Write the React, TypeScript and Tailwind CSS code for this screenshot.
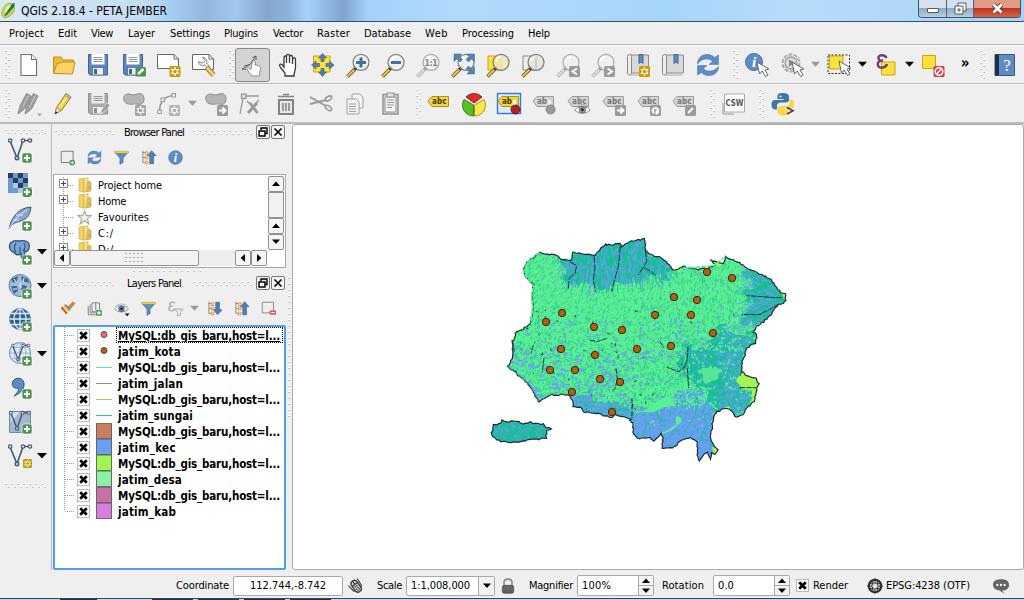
import React, { useLayoutEffect, useRef } from "react";

type Pt = [number, number];

/* Text whose letter spacing is tuned so that it spans a given width. */
function Fit({ w, children, className = "" }: { w: number; children: string; className?: string }) {
  const ref = useRef<HTMLSpanElement>(null);
  useLayoutEffect(() => {
    const el = ref.current;
    if (!el) return;
    el.style.letterSpacing = "0px";
    const natural = el.getBoundingClientRect().width;
    el.style.letterSpacing = `${(w - natural) / children.length}px`;
  }, [w, children]);
  return (
    <span ref={ref} className={`inline-block shrink-0 whitespace-pre ${className}`}>
      {children}
    </span>
  );
}

function Dots({ id, className }: { id: string; className: string }) {
  return (
    <svg className={className} shapeRendering="crispEdges">
      <defs>
        <pattern id={id} width="6" height="6" patternUnits="userSpaceOnUse">
          <rect x="0" y="0" width="2" height="2" fill="#fff" />
          <rect x="1" y="1" width="1" height="1" fill="#b5b5b5" />
          <rect x="0" y="1" width="1" height="1" fill="#d0d0d0" />
          <rect x="3" y="3" width="2" height="2" fill="#fff" />
          <rect x="4" y="4" width="1" height="1" fill="#b5b5b5" />
          <rect x="3" y="4" width="1" height="1" fill="#d0d0d0" />
        </pattern>
      </defs>
      <rect width="100%" height="100%" fill={`url(#${id})`} />
    </svg>
  );
}

function Tri({ c = "#000", dir = "down", s = 9 }: { c?: string; dir?: "down" | "up" | "left" | "right"; s?: number }) {
  const d = { down: "M0 2H10L5 7.5Z", up: "M0 7.5H10L5 2Z", left: "M7.5 0V10L2 5Z", right: "M2.5 0V10L8 5Z" }[dir];
  return (
    <svg width={s} height={s} viewBox="0 0 10 10" className="shrink-0">
      <path d={d} fill={c} />
    </svg>
  );
}

const Plus = ({ x = 14, y = 14 }: { x?: number; y?: number }) => (
  <g transform={`translate(${x} ${y})`}>
    <rect width="10" height="10" rx="2" fill="#4f9450" stroke="#fff" strokeWidth=".6" />
    <path d="M5 2V8M2 5H8" stroke="#fff" strokeWidth="2" />
  </g>
);
const Star = ({ x = 13, y = 13, c = "#c99c08" }: { x?: number; y?: number; c?: string }) => (
  <g transform={`translate(${x} ${y})`}>
    <rect width="11" height="11" rx="1.5" fill={c} />
    <path d="M5.5 1.2V9.8M1.8 3.4L9.2 7.6M9.2 3.4L1.8 7.6" stroke="#fff" strokeWidth="1.5" />
    <circle cx="5.5" cy="5.5" r="2.3" fill={c} stroke="#fff" strokeWidth="1" />
  </g>
);
const Badge = ({ d }: { d: string }) => (
  <g transform="translate(13 13)">
    <rect width="11" height="11" rx="1.5" fill="#9b9b9b" />
    <path d={d} stroke="#fff" strokeWidth="2" fill="none" />
  </g>
);
const Lens = ({ dim = false, fill = "#eef0ee" }: { dim?: boolean; fill?: string }) => (
  <g>
    <path d="M10 15L1.5 23.5" stroke={dim ? "#aaa" : "#4d4020"} strokeWidth="3.4" />
    <path d="M8.5 16.5L1.7 23.2" stroke={dim ? "#ddd" : "#f6c63b"} strokeWidth="2" />
    <path d="M11 13.8L8.6 16.3" stroke={dim ? "#888" : "#222"} strokeWidth="2.6" />
    <circle cx="15" cy="9.3" r="8" fill={fill} fillOpacity=".85" stroke={dim ? "#aaa" : "#7d7d7d"} strokeWidth="1.2" />
    <path d="M10 8a5.5 5.5 0 0 1 5-4.2" stroke="#fff" strokeWidth="1.4" fill="none" />
  </g>
);
const Tag = ({ c = "#d4d4d4", s = "#9c9c9c", t = "#777", label = "abc", y = 4 }: { c?: string; s?: string; t?: string; label?: string; y?: number }) => (
  <g transform={`translate(0 ${y})`}>
    <path d="M1 5L5 .5H21.5V10.5H5Z" fill={c} stroke={s} />
    <text x="5" y="8.2" fontSize="8" fontWeight="700" fill={t} fontFamily="DejaVu Sans" textLength={label === "abc" ? 14.5 : 10}>
      {label}
    </text>
  </g>
);
const Floppy = ({ a = "#5b86c0", b = "#3f6494", l = "#fff" }: { a?: string; b?: string; l?: string }) => (
  <g>
    <path d="M1.5 1.5H20.5V22H3L1.5 20.5Z" fill={a} stroke={b} strokeLinejoin="round" />
    <rect x="4.5" y="1" width="13" height="10.500" fill={l} />
    <path d="M6.5 4.5H15.5M6.5 6.5H15.5M6.5 8.5H15.5" stroke="#999" />
    <rect x="5.5" y="14.500" width="11" height="7.5" fill="#eee" stroke={b} strokeWidth=".7" />
    <rect x="7" y="16" width="3" height="5" fill={b} />
  </g>
);
const Cursor = ({ x = 0, y = 0 }: { x?: number; y?: number }) => (
  <path transform={`translate(${x} ${y})`} d="M12 9L14.5 21L17.2 18L20.5 23.5L23 22L20 17L23.8 16Z" fill="#fff" stroke="#666" strokeWidth="1" strokeLinejoin="round" />
);
const Refresh = () => (
  <g fill="#5c8dc9" stroke="#456f9f" strokeWidth=".5">
    <path d="M1.5 11C1.5 4 7 1 12 1.5c3 .2 5 1.3 6.5 3L22.5 2v9.5H13l3.5-3.2C13 4.8 6 4.8 1.5 11Z" />
    <path d="M22.5 13.5C22.5 20 17 23 12 22.5c-3-.2-5-1.3-6.5-3L1.5 22v-9.5H11l-3.5 3.2c3.5 3.5 10.500 3.500 15-2.200Z" />
  </g>
);
const Globe = ({ lat = true }: { lat?: boolean }) => (
  <g>
    <circle cx="12" cy="11" r="10.500" fill={lat ? "#2f5e95" : "#e2ebf5"} stroke="#5f86b0" />
    <path d="M12 .5V21.5M1.500 11H22.500M3 5.500H21M3 16.500H21M12 .5C4 5 4 17 12 21.500M12 .5c8 4.500 8 16.500 0 21" fill="none" stroke={lat ? "#dfeaf6" : "#9dbadb"} strokeWidth={lat ? 1.3 : 1} />
  </g>
);
const Vee = ({ o = 0, k = 1 }: { o?: number; k?: number }) => (
  <g transform={`translate(${o} ${o / 2}) scale(${k})`} fill="none" stroke="#42586e" strokeWidth="1.200">
    <path d="M2.500 4L9 20L14.500 4M17 2.500H21" strokeWidth="1.600" />
    <circle cx="2.200" cy="2.500" r="1.700" fill="#f8f8f8" />
    <circle cx="15" cy="2.500" r="1.700" fill="#f8f8f8" />
    <circle cx="22" cy="2.500" r="1.700" fill="#f8f8f8" />
    <circle cx="9" cy="20" r="1.900" fill="#a9bfd6" />
  </g>
);
const Info = ({ cx = 12, cy = 12, r = 11 }: { cx?: number; cy?: number; r?: number }) => (
  <g>
    <circle cx={cx} cy={cy} r={r} fill="#5e8cc4" stroke="#4571a6" />
    <text x={cx} y={cy + r * 0.6} textAnchor="middle" fontFamily="Liberation Serif" fontStyle="italic" fontWeight="700" fontSize={r * 1.8} fill="#fff">
      i
    </text>
  </g>
);
const Blob = () => <path d="M2 8C.5 3 5 1 9 2.500s6-1.500 10-.8c4 1 4 9 .5 10.300-4 1.200-5-1-9 .2C6 12.500 3 11.500 2 8Z" fill="#b5b5b5" stroke="#8f8f8f" />;
const Funnel = () => (
  <g>
    <path d="M1.500 3.500L9.500 13V23L14.500 20V13L22.500 3.500Z" fill="#5e8cc4" stroke="#416b9e" />
    <path d="M1 2H23V5H1Z" fill="#f7df3c" stroke="#9d8c32" strokeWidth=".7" />
  </g>
);
const TreeArrow = ({ up = true }: { up?: boolean }) => (
  <g>
    <path d="M3 1V20M3 4H8M3 12H8M3 20H8" stroke="#888" fill="none" strokeWidth="1.500" />
    <path d="M7 3h4v4H7zM7 10h4v4H7zM7 18h4v4H7z" fill="#fff" stroke="#f08a17" strokeWidth="1.500" />
    <path d={up ? "M17 1L24 9H20V22H14V9H10.500Z" : "M17 22L24 14H20V2H14V14H10.500Z"} fill="#4e7fb9" stroke="#33608f" />
  </g>
);
const Bookmark = () => (
  <g>
    <path d="M4.500 2H22.500V20H4.500Z" fill="#d8d8d8" stroke="#8c8c8c" />
    <path d="M1.500 3.500a1.600 1.600 0 0 1 4 0V20c0 2.500-4 2.500-4 0Z" fill="#eee" stroke="#888" />
    <path d="M4 22H21" stroke="#aaa" />
    <path d="M13 1.500h4v9l-2-1.700-2 1.700Z" fill="#5e8cc4" stroke="#3e648f" />
  </g>
);
const Eye = ({ y = 0, b = "#4f83bd" }: { y?: number; b?: string }) => (
  <g transform={`translate(0 ${y})`}>
    <path d="M1 13C6 6 17 6 23 13C17 19 7 19 1 13Z" fill="#fff" stroke="#777" strokeWidth="1.200" />
    <circle cx="12" cy="12.500" r="4.700" fill={b} stroke="#555" />
    <circle cx="12" cy="12.500" r="2" fill="#222" />
    <path d="M2 9C7 3.500 17 3.500 22 9" fill="none" stroke="#999" />
  </g>
);

const icons: Record<string, React.ReactNode> = {
  new: <g fill="#fff" stroke="#6e6e6e" strokeWidth="1.100"><path d="M4 1.500H14.500L19.500 6.500V22.500H4Z" /><path d="M14.500 1.500V6.500H19.500" /></g>,
  open: <g fill="#efb92f" stroke="#c08f1d"><path d="M1.500 20V4H9L11 7H21.500V11H5Z" /><path d="M5 10.500L11 9H23L20.500 21L1.500 20.500Z" fill="#f9d365" /></g>,
  save: <Floppy />,
  saveas: <g><Floppy /><rect x="13.500" y="14" width="10.500" height="9.500" rx="1.500" fill="#4b9150" /><path d="M16 21L21.500 16" stroke="#fff" strokeWidth="2.500" /></g>,
  print: <g><path d="M.5 1.500H17L21.500 6V15.500H.5Z" fill="#fff" stroke="#666" /><path d="M17 1.500V6H21.500" fill="none" stroke="#666" /><Star x={12.500} y={13} /></g>,
  composer: <g><path d="M.5 1.500H17L21.500 6V16.500H.5Z" fill="#fff" stroke="#666" /><path d="M17 1.500V6H21.500" fill="none" stroke="#666" /><path d="M14.500 14L21.500 22" stroke="#8f7635" strokeWidth="5" /><path d="M14.500 14L21.500 22" stroke="#f4cf73" strokeWidth="3.400" /><path d="M6.500 8.500C6.500 12 10 13.500 12.500 12L15 14.500L17 12.500L14.500 10C16 7 13.500 4.500 10.500 4.500L13 7.500L10.500 10Z" fill="#eee" stroke="#666" strokeWidth=".8" /></g>,
  touch: <g><path d="M10 22C8 19 6 17 6 15.500s2.500-.5 4 1L11.500 8c1-2 2.500-1 2.500.5V12c3 0 6 1 5.500 4.500L18 23H12Z" fill="#fff" stroke="#777" strokeWidth=".8" /><path d="M1 16L9 11.500 15 3M3 13l6-1.500M15 3l-3.500 1.500M15 3v4M1 16l4 .5" fill="none" stroke="#555" strokeWidth=".9" /></g>,
  pan: <path d="M9 23V20L4.500 14.500C2.500 11.500 4 10 6.500 12L8 14V4.500C8 2.500 10.500 2.500 10.500 4.500V10V3C10.500 .8 13.500.8 13.500 3V10V4C13.500 2 16.500 2 16.500 4V11V6.500C16.500 4.500 19.500 4.500 19.500 6.500V14C19.500 18 18 19 18 23Z" fill="#fff" stroke="#3b3b3b" strokeWidth="1.300" />,
  pansel: <g><path d="M2.500 3H19V19H2.500Z" fill="#fbe23b" stroke="#cba418" /><g fill="#4e7fb6" stroke="#315a89" strokeWidth=".6"><path d="M11.500 0.5L15.500 5H13V8.500H10V5H7.500Z" /><path d="M11.500 23.500L15.500 19H13V15.500H10V19H7.500Z" /><path d="M.5 12L5 8V10.500H8.500V13.500H5V16Z" /><path d="M23 12L18.500 8V10.500H15V13.500H18.500V16Z" /></g></g>,
  zin: <g><Lens /><path d="M15 4.500V14.500M10 9.500H20" stroke="#416f9f" strokeWidth="3" /></g>,
  zout: <g><Lens /><path d="M10 9.500H20" stroke="#416f9f" strokeWidth="3" /></g>,
  z11: <g><Lens dim /><text x="15" y="12.500" textAnchor="middle" fontSize="8.500" fontWeight="700" fill="#858585" fontFamily="DejaVu Sans" textLength="13">1:1</text></g>,
  zfull: <g><Lens /><g fill="#5583b8" stroke="#36608e" strokeWidth=".5"><path d="M3 1H10.500L8.500 3.500L11.500 6.500L9 9L6 6L3 8.500Z" /><path d="M23.500 1H16L18 3.500L15 6.500L17.500 9L20.500 6L23.500 8.500Z" /><path d="M23.500 21H16L18 18.500L15 15.500L17.500 13L20.500 16L23.500 13.500Z" /></g></g>,
  zsel: <g><path d="M2 3H15V17H2Z" fill="#fbe23b" stroke="#cba418" /><Lens fill="#ece7b8" /></g>,
  zlayer: <g><path d="M2 3H15V17H2Z" fill="#eee" stroke="#888" /><Lens fill="#e2e2de" /><path d="M15 3V16" stroke="#bbb" /></g>,
  zlast: <g><Lens dim /><Badge d="M8 2.500L3.500 5.500L8 8.500" /></g>,
  znext: <g><Lens dim /><Badge d="M3.500 2.500L8 5.500L3.500 8.500" /></g>,
  bookn: <g><Bookmark /><Star /></g>,
  book: <Bookmark />,
  refresh: <Refresh />,
  identify: <g><Info cx={9} cy={9} r={8.500} /><Cursor /></g>,
  action: <g><circle cx="11" cy="10" r="8.500" fill="#eee" stroke="#aaa" strokeWidth="2" strokeDasharray="4 1.300" /><circle cx="11" cy="10" r="6" fill="#ddd" stroke="#999" strokeWidth="1.300" /><path d="M9 6.500L15.500 10L9 13.500Z" fill="#888" /><Cursor /></g>,
  select: <g><path d="M2.500 3H16V16H2.500Z" fill="#fbe23b" stroke="#cba418" /><rect x="1" y="2" width="21.500" height="18.500" fill="none" stroke="#333" strokeDasharray="2 1.500" /><Cursor y={-1} /></g>,
  expr: <g><path d="M7.500 9H21V22H7.500Z" fill="#fbe23b" stroke="#cba418" /><path d="M12.500 5C11 1 3.500 1.500 4.500 5.500c.5 2 3 2.200 4.500 2-4 0-6 2-5 5 1 3.500 8 2.500 9-1.500" fill="none" stroke="#68407d" strokeWidth="2.400" /></g>,
  desel: <g><path d="M1.500 2.500H14.500V15.500H1.500Z" fill="#fbe23b" stroke="#cba418" /><rect x="12.500" y="13" width="11" height="11" rx="1.500" fill="#d94145" /><circle cx="18" cy="18.500" r="3.800" fill="none" stroke="#fff" strokeWidth="1.500" /><path d="M15.500 21L20.500 16" stroke="#fff" strokeWidth="1.500" /></g>,
  help: <g><path d="M2 1.500H21.500V22.500H2Z" fill="#5f8bc2" stroke="#3c5879" /><path d="M2 1.500H6V22.500H2Z" fill="#1c3347" /><text x="14" y="17.500" textAnchor="middle" fontSize="17" fontFamily="Liberation Serif" fill="#fff">?</text></g>,
  pencils: <g fill="#a0a0a0" stroke="#8a8a8a"><path d="M1 22L3 14L9.500 1.500L14 4L7.500 17Z" /><path d="M8 22L10 14L16.500 1.500L21 4L14.500 17Z" /><path d="M5.500 15L11.500 3.500M12.500 15L18.500 3.500" stroke="#c5c5c5" /><path d="M20 21.500H25L22.500 24.200Z" stroke="none" /></g>,
  pencil: <g><path d="M3 22L4.500 15.500L14 1.500L19 5L9.500 18.500Z" fill="#edd23e" stroke="#92802c" /><path d="M7 16L15.500 4" stroke="#fff19c" strokeWidth="1.500" /><path d="M14 1.500L19 5L17.500 7L12.500 3.500Z" fill="#c3bfa3" stroke="#777" strokeWidth=".6" /><path d="M3 22L4.500 15.500L9.500 18.500Z" fill="#f3dbae" stroke="#777" strokeWidth=".6" /><path d="M3 22L3.700 19.500L5.500 20.600Z" fill="#222" /></g>,
  savedim: <g><Floppy a="#aaa" b="#909090" l="#ededed" /><path d="M13 22L15 17L20 11L23 13L18 19Z" fill="#999" stroke="#eee" strokeWidth=".7" /></g>,
  blob: <g><Blob /><Star c="#a5a5a5" /></g>,
  curve: <g><path d="M2.500 20C2.500 9 8 4 17 3.500" fill="none" stroke="#999" strokeWidth="1.500" /><g fill="#eee" stroke="#999"><rect x=".8" y="18" width="3.500" height="3.500" /><rect x="4" y="6" width="3.500" height="3.500" /><rect x="15" y="1.500" width="3.500" height="3.500" /></g><Star x={12} c="#b3b3b3" /></g>,
  blobmove: <g><Blob /><Badge d="M2 5.500H8M5.500 2.500L8.500 5.500L5.500 8.500" /></g>,
  node: <g fill="none" stroke="#999"><path d="M4 6L1 22M6 4H20" strokeWidth="1.300" /><rect x="2.500" y="2" width="4.500" height="4.500" fill="#ddd" strokeWidth="1.300" /><path d="M9 21L18 11M11 11L18.500 21" strokeWidth="2.800" /><path d="M16 12L20 8M8 9L11 12" strokeWidth="1.500" /></g>,
  trash: <g><path d="M5 8H19V22H5Z" fill="#e8e8e8" stroke="#828282" strokeWidth="2" /><path d="M4 4.500H20M9 2.500H15M9 11V19M12 11V19M15 11V19" stroke="#858585" strokeWidth="1.600" /></g>,
  cut: <g fill="none" stroke="#9b9b9b" strokeWidth="1.600"><path d="M1 5L17 14M1 12L17 8" strokeWidth="2" /><ellipse cx="19.500" cy="6.500" rx="3.500" ry="2" transform="rotate(-30 19.500 6.500)" /><ellipse cx="19.500" cy="16" rx="3.500" ry="2" transform="rotate(35 19.500 16)" /></g>,
  copy: <g fill="#f3f3f3" stroke="#a2a2a2"><path d="M8 2H16L19 5V16H8Z" /><path d="M3 7H12L15 10V22H3Z" /><path d="M5 12H12M5 14.500H12M5 17H12M5 19.500H12" /></g>,
  paste: <g fill="#e0e0e0" stroke="#929292"><rect x="4" y="2.500" width="15" height="19.500" strokeWidth="1.500" /><path d="M6 5H17V20H6Z" fill="#f5f5f5" /><rect x="8" y="1" width="7" height="4" /><path d="M8 8H15M8 10.500H15M8 13H15M8 15.500H13" /></g>,
  abc: <Tag c="#f4d638" s="#a99320" t="#443b10" />,
  pie: <g strokeWidth="1"><path d="M11.500 13V24A11 11 0 0 1 2 7.500Z" fill="#58c224" stroke="#397c16" /><path d="M12.500 13V24A11 11 0 0 0 22 7.500Z" fill="#ffe64a" stroke="#a89124" /><path d="M12 11L4 5A11 11 0 0 1 20 5Z" fill="#e2282e" stroke="#991d21" /></g>,
  pin: <g><rect x=".5" y="1.500" width="23" height="20" fill="#dcecfb" stroke="#2d7ae0" strokeWidth="1.400" /><Tag c="#f4d638" s="#a99320" t="#443b10" label="ab" /><path d="M17.500 8V15" stroke="#fff" strokeWidth="3" /><circle cx="18.500" cy="17.500" r="4.500" fill="#ad2227" stroke="#741417" /></g>,
  pindim: <g><Tag label="ab" /><path d="M17.500 8V15" stroke="#eee" strokeWidth="3" /><circle cx="18.500" cy="17.500" r="4.500" fill="#999" stroke="#858585" /></g>,
  tageye: <g><Tag /><g transform="translate(7 9) scale(.7)"><Eye b="#999" /></g></g>,
  tagmove: <g><Tag /><Badge d="M2 5.500H8M5.500 2.500L8.500 5.500L5.500 8.500" /></g>,
  tagrot: <g><Tag /><Badge d="M4 8.500C1 5 4 2 7 3.500C9.500 5 8 8.500 6.500 8.500V5.500" /></g>,
  tagedit: <g><Tag /><Badge d="M3 8L8 3" /></g>,
  csw: <g><path d="M1 11V22H12" fill="none" stroke="#999" /><path d="M2.500 2H22.500V20H2.500Z" fill="#fff" stroke="#aaa" /><text x="3.500" y="14" fontSize="9" fontWeight="700" fill="#555" fontFamily="DejaVu Sans" textLength="18" lengthAdjust="spacingAndGlyphs">CSW</text></g>,
  python: <g><path d="M11.500 1C7 1 6.500 3 6.500 5V7H12.500V8H4C1 8 .5 11 .5 13s1 4.500 4 4.500H6V14c0-2 1.500-3.500 3.500-3.500H15c2 0 3-1 3-3V5c0-3-2.500-4-6.500-4Z" fill="#3977ad" /><path d="M12 23.500C16.500 23.500 17 21.500 17 19.500V17.500H11.500V16.500H20C23 16.500 23 13.500 23 11.500S22 7.500 20 7.500H18.500V10.500c0 2-1.500 3.500-3.500 3.500H9.500c-2 0-3 1-3 3V20c0 2.500 2 3.500 5.500 3.500Z" fill="#ffd545" /><circle cx="9.500" cy="4.500" r="1" fill="#fff" /><path d="M16 15.500L22 18.800L16 22" fill="none" stroke="#444" strokeWidth="1.700" /></g>,
  vec: <g><Vee /><Plus y={15} /></g>,
  raster: <g shapeRendering="crispEdges"><path d="M0 1H20V21H0Z" fill="#6e99cf" /><path d="M0 1H5V6H0ZM10 1H15V6H10ZM5 6H10V11H5ZM15 6H20V11H15ZM10 11H15V16H10Z" fill="#273f5c" /><path d="M5 11H10V16H5ZM10 16H15V21H10Z" fill="#aac8ea" /><Plus y={15} /></g>,
  feather: <g><path d="M1 23C3 13 9 2 23 1C22 8 20 12 15 14C11 16 6 16 3 20Z" fill="#87a8cd" stroke="#3e5875" /><path d="M1 23C5 15 12 8 19 4M5 14H11M8 9H15" fill="none" stroke="#dce8f4" /><Plus y={15} /></g>,
  pg: <g><path d="M3 2.500C7-.5 9 1 11 1S18-1 21 4C22 9 19 13 17 11C16 14 17 16 16 17.500C13 19 13 17 13 14C11 15 8 16 6 12C4 13-1 7 3 2.500Z" fill="#7aa3d2" stroke="#2f5074" strokeWidth="1.300" /><path d="M8 3C6 7 6 10 8 12M16 3C18 6 17 9 15 11M12 7V15" fill="none" stroke="#2f5074" strokeWidth="1.100" /><Plus y={15} /></g>,
  wms: <g><circle cx="12" cy="11.500" r="11" fill="#a2bddc" stroke="#5c7ea4" /><path d="M3 5L10 2L9 7L5 9ZM13 2L20 5L21 9L14 7ZM3 12L9 12L10 17L6 20ZM14 11L19 12L17 18L13 16Z" fill="#406894" /><path d="M6 5L8 8M16 4L15 8M12 9L13 14M5 15h4" stroke="#e8f1fa" /><Plus y={15} /></g>,
  wcs: <g><Globe /><Plus y={14} /></g>,
  wfs: <g><Globe lat={false} /><Vee o={3} k={0.800} /><Plus y={14} /></g>,
  comma: <g><path d="M5 5C8 0 17 2 16 9C15.500 15 11 18 6 20C10 16 11 14 10 12C5 13 3 9 5 5Z" fill="#5e8cc0" stroke="#34577e" /><Plus y={13} /></g>,
  virt: <g><path d="M1.500 1.500H22.500V22.500H1.500Z" fill="#a3b7cf" stroke="#718ba8" /><path d="M2 2L12 2L3 12Z" fill="#d3e0ee" /><Vee o={1} k={0.900} /><Plus y={14} /></g>,
  newvec: <g><Vee /><g transform="translate(15 15) scale(.82)"><Star x={0} y={0} /></g></g>,
  addlay: <g><path d="M2 2H21V20H2Z" fill="#eee" stroke="#777" strokeWidth="1.500" /><path d="M15 20a4.500 4.500 0 1 1 9 0 4.500 4.500 0 1 1-9 0" fill="#4b914f" /><path d="M19.500 17.500V22.500M17 20H22" stroke="#fff" strokeWidth="1.700" /></g>,
  funnel: <Funnel />,
  up: <TreeArrow />,
  down: <TreeArrow up={false} />,
  info: <Info />,
  brush: <g><path d="M1 11L9 5L17 13L10 21Z" fill="#ecc44b" /><path d="M1 11L4 9L12 19L10 21Z" fill="#df4848" /><path d="M4 9L6 7.500L14 16L12 19Z" fill="#f5dd47" /><path d="M7 6.500L9 5L17 13L15 15Z" fill="#4d83d0" /><path d="M13 9L21 1L24 4L17 12Z" fill="#ce8c42" stroke="#a96f30" /></g>,
  group: <g fill="none" stroke="#777" strokeWidth="1.400"><path d="M2 8V22H15M5 5V19H17M8 3H20V17H8Z" /><path d="M14 2V15" stroke="#4e789d" /><Plus y={14} /></g>,
  eye: <g><Eye /><path d="M17 20H25L21 24.500Z" fill="#111" /></g>,
  epsf: <g><path d="M11 4C9 0 1 2 3 6C4 8 6 8 7 8C2 8 0 11 2 14C4 17 10 16 11 12" fill="none" stroke="#aaa" strokeWidth="2.200" /><path d="M11 13H24L20 18V23L15 24V18Z" fill="#eee" stroke="#aaa" strokeWidth="1.500" /></g>,
  remove: <g><path d="M2 2H20V19H2Z" fill="#eee" stroke="#888" strokeWidth="1.500" /><rect x="14" y="15" width="10" height="7" rx="1.500" fill="#e04c4f" /><path d="M16 18.500H22" stroke="#fff" strokeWidth="2" /></g>,
  mouse: <g transform="rotate(-35 12 12)" fill="#ddd" stroke="#333"><rect x="7" y="3" width="10" height="19" rx="5" strokeWidth="2" /><path d="M7 9H17M12 3V9M9 12H15M3 5L5 18M20 4L19 18" strokeWidth="1.600" /><circle cx="12" cy="17" r="2.500" fill="#bbb" /></g>,
  lock: <g><path d="M6 12V7C6 0 18 0 18 7V12" fill="none" stroke="#8e8e8e" strokeWidth="2.500" /><rect x="3.500" y="11" width="17" height="12" rx="3" fill="#5f5f5f" stroke="#444" /><path d="M5 14H19M5 17H19" stroke="#777" /></g>,
  crs: <g fill="none"><circle cx="12" cy="12" r="9.500" fill="#bbb" stroke="#2b2b2b" strokeWidth="3" /><path d="M12 0V24M0 12H24M4 8H20M4 16H20M8 4V20M16 4V20" stroke="#333" strokeWidth="1.300" /><path d="M12 7L17 12L12 17L7 12Z" fill="#eee" stroke="#555" /></g>,
  msg: <g><path d="M0 10.500C0 4.500 5 2 12 2S24 4.500 24 10.500 19 19 13.500 19L18 24L9 18.500C4 18 0 15 0 10.500Z" fill="#646464" /><circle cx="6.500" cy="10.500" r="1.700" fill="#fff" /><circle cx="12" cy="10.500" r="1.700" fill="#fff" /><circle cx="17.500" cy="10.500" r="1.700" fill="#fff" /></g>,
};

function Icon({ n, s = 24 }: { n: string; s?: number }) {
  return (
    <svg width={s} height={s} viewBox="0 0 24 24" className="shrink-0 overflow-visible">
      {icons[n]}
    </svg>
  );
}
function Tool({ n, on = false }: { n: string; on?: boolean }) {
  return (
    <div className={`flex h-[34px] w-[35px] shrink-0 items-center justify-center ${on ? "rounded-[3px] border border-[#888] bg-[#d3d3d3]" : ""}`}>
      <Icon n={n} />
    </div>
  );
}
const Tools = ({ names }: { names: string }) => (
  <>
    {names.split(" ").map((n) => (
      <Tool key={n} n={n} on={n === "touch"} />
    ))}
  </>
);
const Drop = ({ c }: { c?: string }) => (
  <div className="flex h-8 w-3 shrink-0 items-center justify-center">
    <Tri c={c} />
  </div>
);

/* ---------- map ---------- */
const parse = (s: string): Pt[] => s.trim().split(/\s+/).map((p) => p.split(",").map(Number) as Pt);
const rng = (seed: number) => () => {
  seed = (seed * 1664525 + 1013904223) >>> 0;
  return seed / 4294967296;
};
const MAIN = parse(
  "132,130 140,112 165,95 178,82 195,88 215,88 235,95 240,102 268,108 277,104 280,82 300,85 345,90 358,75 375,58 395,60 420,55 425,66 450,50 470,45 495,42 496,75 510,90 540,95 558,110 580,135 600,130 610,125 640,133 665,132 700,125 705,118 692,105 715,112 732,115 735,95 760,105 790,120 810,135 845,148 875,165 890,185 902,205 915,205 918,225 912,235 895,238 870,270 850,290 830,302 822,320 830,330 825,355 800,370 795,390 785,415 785,440 805,453 830,460 836,478 828,495 822,530 810,540 795,555 790,570 768,578 755,560 735,548 712,560 700,575 695,610 690,640 700,660 712,672 705,688 695,685 692,703 680,680 670,690 657,710 650,690 652,670 650,645 630,637 600,650 590,660 570,670 545,672 550,650 545,625 520,648 510,637 470,640 460,620 460,600 450,585 430,575 405,570 395,578 350,565 310,560 300,548 280,545 275,520 265,508 215,510 175,530 160,500 150,485 125,460 105,440 80,425 92,415 98,385 98,350 110,320 130,312 150,295 155,270 160,250 155,215 160,180 145,165 132,150",
);
const ISLE = parse("35,625 42,600 65,593 68,585 80,590 110,588 130,595 150,592 165,597 190,596 200,608 212,610 200,618 198,640 150,645 120,650 85,654 50,645 36,635");
const NORTH = parse("238,100 280,80 350,80 380,50 500,38 505,85 560,105 582,140 560,158 505,150 480,165 400,172 365,190 330,175 290,175 240,162 255,135");
const EAST = parse("800,130 850,145 925,205 920,240 830,305 795,290 785,268 820,235 790,205 835,190 795,155");
const SE = parse("600,385 615,350 650,365 690,362 710,310 740,305 760,340 835,320 825,360 785,440 850,470 820,540 768,585 700,560 690,500 630,490 620,450 590,430");
const PADDY = parse("655,435 690,425 722,435 720,465 670,468");
const SOUTH = parse("275,512 330,505 345,535 420,530 465,560 480,545 560,545 590,500 640,490 700,505 700,575 720,700 640,720 540,680 450,650 440,580 350,575 280,550");

function inside([x, y]: Pt, poly: Pt[]) {
  let r = false;
  for (let i = 0, j = poly.length - 1; i < poly.length; j = i++) {
    const [a, b] = poly[i];
    const [c, d] = poly[j];
    if (b > y !== d > y && x < ((c - a) * (y - b)) / (d - b) + a) r = !r;
  }
  return r;
}
function rough(poly: Pt[], seed: number, amp = 5) {
  const r = rng(seed);
  let out = "";
  poly.forEach(([x, y], i) => {
    const [u, v] = poly[(i + 1) % poly.length];
    const n = Math.max(1, Math.round(Math.hypot(u - x, v - y) / 7));
    for (let k = 0; k < n; k++) {
      const t = k / n;
      out += `${out ? "L" : "M"}${(x + (u - x) * t + (r() - 0.5) * amp).toFixed(1)} ${(y + (v - y) * t + (r() - 0.5) * amp).toFixed(1)}`;
    }
  });
  return out + "Z";
}
function texture() {
  const r = rng(77);
  const p = { blue: "", teal: "", green: "", dark: "", fields: "", black: "" };
  const seg = (x: number, y: number, a: number, l: number) =>
    `M${x.toFixed(0)} ${y.toFixed(0)}l${(Math.cos(a) * l).toFixed(1)} ${(Math.sin(a) * l).toFixed(1)}`;
  for (let i = 0; i < 19000; i++) {
    const x = 30 + r() * 890;
    const y = 38 + r() * 675;
    const q = r();
    const jx: Pt = [x + (r() - 0.5) * 40, y + (r() - 0.5) * 46];
    if (x < 215 && y > 580) {
      if (q < 0.4) p.blue += seg(x, y, r() * 6, 8);
      continue;
    }
    if (inside(jx, NORTH)) {
      const a = 1.57 + (400 - x) / 400 + (r() - 0.5) * 0.4;
      if (q < 0.38) p.blue += seg(x, y, a, 8 + r() * 12);
      else if (q < 0.7) p.teal += seg(x, y, a, 12 + r() * 10);
    } else if (inside(jx, EAST)) {
      const a = Math.atan2(y - 215, x - 910) + (r() - 0.5) * 0.3;
      if (q < 0.4) p.blue += seg(x, y, a, 10 + r() * 14);
      else if (q < 0.65) p.teal += seg(x, y, a, 12);
    } else if (inside([x, y], PADDY)) {
      if (q < 0.3) p.dark += seg(x, y, r() * 6, 5);
    } else if (inside(jx, SE)) {
      if (q < (x > 715 ? 0.62 : 0.22)) p.blue += seg(x, y, r() * 6, 10);
      else if (q < 0.7) p.teal += seg(x, y, r() * 6, 8);
      else if (q < (y < 380 || x < 640 ? 0.92 : 0.76)) p.green += seg(x, y, r() * 6, 9);
    } else if (inside(jx, SOUTH)) {
      if (q < (x < 460 ? 0.6 : 0.14)) p.teal += seg(x, y, r() * 6, 8 + r() * 6);
      else if (q < 0.8 && y < 545 && x > 400) p.green += seg(x, y, r() * 6, 9);
      else if (q < 0.19 && y < 600) p.green += seg(x, y, r() * 6, 7);
    } else {
      const a = y < 290 ? 2.1 + (r() - 0.5) * 0.7 - (x - 300) / 900 : r() < 0.5 ? 0.3 : 1.8;
      if (q < 0.34) p.dark += seg(x, y, a, 4 + r() * 7);
      else if (q < (x > 460 && y > 400 ? 0.55 : 0.43)) p.teal += seg(x, y, a, 2 + r() * 5);
      else if (q < (y > 380 ? 0.61 : y > 280 ? 0.52 : 0.45)) {
        const w = 3 + r() * (y > 380 ? 10 : 5);
        const h = 3 + r() * 5;
        p.fields += `M${x.toFixed(0)} ${y.toFixed(0)}h${w.toFixed(0)}l-2 ${h.toFixed(0)}h-${w.toFixed(0)}z`;
      } else if (q > 0.993 && y > 240) p.black += seg(x, y, r() * 3, 3 + r() * 6);
    }
  }
  return p;
}
const TEX = texture();
const MAIN_D = rough(MAIN, 5);
const ISLE_D = rough(ISLE, 9);
const CITIES = parse(
  "681,141 756,159 582,216 651,225 246,264 198,291 525,270 633,270 342,306 426,315 699,324 243,372 345,390 471,372 573,363 210,435 285,435 360,462 420,471 276,501 396,561",
);

function MapDrawing() {
  return (
    <svg width="320" height="250" viewBox="0 0 960 750" className="block">
      <defs>
        <clipPath id="land">
          <path d={MAIN_D + ISLE_D} />
        </clipPath>
      </defs>
      <g clipPath="url(#land)">
        <path d={MAIN_D} fill="#57ee94" />
        <path d={ISLE_D} fill="#1cbc99" />
        <path d={rough(SOUTH, 3, 14)} fill="#699ff2" />
        <path d={rough(NORTH, 3, 22)} fill="#1cbc99" />
        <path d={rough(EAST, 4, 26)} fill="#1cbc99" />
        <path d={rough(SE, 6, 28)} fill="#1cbc99" />
        <g fill="none" strokeWidth="2.600">
          <path d={TEX.dark} stroke="#42cc8d" />
          <path d={TEX.fields} fill="#69a3ec" />
          <path d={TEX.teal} stroke="#1cbc99" />
          <path d={TEX.blue} stroke="#699ff2" />
          <path d={TEX.green} stroke="#59ef95" strokeWidth="4" />
          <path d={TEX.black} stroke="#143a35" strokeWidth="3" />
        </g>
        <path d={rough(PADDY, 2, 16)} fill="#57e598" />
        <path d="M785 440L805 453L840 460L836 497L790 494L768 468ZM800 368L828 354L815 378L797 392ZM815 496H828V545L808 535L817 520ZM722 553L748 543L755 560ZM695 665L715 672L705 692ZM905 203H922V232L912 222ZM826 302L842 293L848 297L832 308ZM696 112L730 118L712 125ZM582 136L605 131L600 140Z" fill="#a1f554" />
        <path d="M540 622C565 620 575 605 588 600C590 588 583 580 590 574C600 572 608 582 603 592L590 603L576 615L550 627Z" fill="#59ef95" />
        <path d="M465 560C510 570 520 520 570 515L585 540L550 545L520 560ZM570 495L650 488" fill="#59ef95" stroke="#59ef95" strokeWidth="4" />
        <path d="M640 500L655 530L645 570L620 610M690 500L670 560L680 600L660 640M600 510L610 550L595 570M490 565L500 600L485 635M530 560L545 590L570 585M655 645H690M620 530L640 550" fill="none" stroke="#1cbc99" strokeWidth="3" />
      </g>
      <path d={MAIN_D + ISLE_D} fill="none" stroke="#152c36" strokeWidth="3.500" />
      <path d="M178 82L142 110L131 140L145 165L160 182L155 215L158 250L152 293M736 95L700 122L610 130" fill="none" stroke="#59ef95" strokeWidth="5" strokeDasharray="14 3" />
      <g fill="none" stroke="#15313b" strokeWidth="3">
        <path d="M421 62L416 120L405 160L395 200M496 75L500 110L485 135L475 150M490 128L515 140L525 152M342 92L345 130L340 165L347 200M270 110L290 122L285 145L268 160L265 195" strokeDasharray="22 4" />
        <path d="M905 218L870 217L835 214L800 212M895 238L865 255L840 268L785 269M624 365L622 400L615 425L597 440L560 427M622 430L626 490M785 440L780 452M780 488H828M456 520V580L447 588M408 430L412 460L406 490L395 500M98 350L103 380M160 360L153 385M192 400L187 440M330 345L350 350L380 340M540 350L552 368" strokeDasharray="16 3" />
      </g>
      <path d="M82 425L110 445L150 480L178 528" fill="none" stroke="#4a82cb" strokeWidth="3" />
      {CITIES.map(([x, y]) => (
        <circle key={`${x}-${y}`} cx={x} cy={y} r="11" fill="#b0620f" stroke="#38250f" strokeWidth="3" />
      ))}
    </svg>
  );
}

/* ---------- panels ---------- */
const DockButton = ({ close = false }: { close?: boolean }) => (
  <div className="flex size-[14px] shrink-0 items-center justify-center rounded-[2px] border border-[#777] bg-[#f4f4f4]">
    <svg width="10" height="10" viewBox="0 0 10 10" fill="none" stroke="#000">
      {close ? <path d="M1.500 1.500L8.500 8.500M8.500 1.500L1.500 8.500" strokeWidth="1.600" /> : <path d="M3 3V1H9V6.500H7M1 4H7V9H1Z" strokeWidth="1.400" />}
    </svg>
  </div>
);
function PanelTitle({ title, w, id }: { title: string; w: number; id: string }) {
  return (
    <div className="flex h-4 items-center pr-px">
      <Dots id={id + "a"} className="ml-[2px] h-[5px] w-[60px] shrink-0" />
      <div className="flex flex-1 justify-center pt-px">
        <Fit w={w}>{title}</Fit>
      </div>
      <Dots id={id + "b"} className="mr-[3px] h-[5px] w-[60px] shrink-0" />
      <DockButton />
      <div className="w-px" />
      <DockButton close />
    </div>
  );
}
const SmallTool = ({ n }: { n: string }) => (
  <div className="flex h-6 w-[27px] shrink-0 items-center justify-center">
    <Icon n={n} s={15} />
  </div>
);
const ScrollBtn = ({ dir, className = "size-4" }: { dir: "up" | "down" | "left" | "right"; className?: string }) => (
  <div className={`flex shrink-0 items-center justify-center rounded-[2px] border border-[#929292] bg-[#f5f5f5] ${className}`}>
    <Tri dir={dir} s={8} />
  </div>
);
const Folder = () => (
  <svg width="14" height="16" viewBox="0 0 14 16" className="shrink-0">
    <path d="M1 2L6 1V15L1 14Z" fill="#f0d268" stroke="#cfae46" strokeWidth=".6" />
    <path d="M6 2L10 .5V14L6 15.500Z" fill="#f8e28c" stroke="#c8a646" strokeWidth=".6" />
    <path d="M10 4L13 5V14L8 15Z" fill="#e2bc4c" stroke="#c8a646" strokeWidth=".6" />
    <path d="M12 9V12" stroke="#6aaad0" />
  </svg>
);
function TreeRow({ label, w, leaf = false }: { label: string; w: number; leaf?: boolean }) {
  return (
    <div className="flex h-4 items-center">
      <svg width="24" height="16" viewBox="0 0 24 16" className="shrink-0" shapeRendering="crispEdges">
        <path d="M9.500 0V16M10 8.500H20" stroke="#999" strokeDasharray="1 1" fill="none" />
        {!leaf && (
          <g fill="#fff" stroke="#8a8a8a">
            <rect x="5.500" y="2.500" width="8" height="8" />
            <path d="M7 6.500H12M9.500 4V9" stroke="#444" />
          </g>
        )}
      </svg>
      {leaf ? (
        <svg width="15" height="15" viewBox="0 0 16 16" className="-ml-px shrink-0">
          <path d="M8 .8L10 6H15.300L11 9.200L12.700 15L8 11.500L3.300 15L5 9.200L.7 6H6Z" fill="#f4f4ee" stroke="#aaa9a0" strokeWidth="1.200" />
        </svg>
      ) : (
        <Folder />
      )}
      <Fit w={w} className="ml-[6px] pt-[2px]">{label}</Fit>
    </div>
  );
}
const Check = () => (
  <div className="flex size-[13px] shrink-0 items-center justify-center border border-[#b9b9b9] bg-white">
    <svg width="9" height="9" viewBox="0 0 9 9">
      <path d="M1.200 1.200L7.800 7.800M7.800 1.200L1.200 7.800" stroke="#000" strokeWidth="2.700" />
    </svg>
  </div>
);
const DB = "MySQL:db_gis_baru,host=l...";
const LAYERS: [string, number, "dot" | "line" | "box", string][] = [
  [DB, 162, "dot", "#ef7070"],
  ["jatim_kota", 63, "dot", "#b0620f"],
  [DB, 162, "line", "#66e29a"],
  ["jatim_jalan", 65, "line", "#7d9a78"],
  [DB, 162, "line", "#ceb863"],
  ["jatim_sungai", 75, "line", "#32c896"],
  [DB, 162, "box", "#c97e5c"],
  ["jatim_kec", 58, "box", "#699ff2"],
  [DB, 162, "box", "#a1f554"],
  ["jatim_desa", 64, "box", "#8ff0a8"],
  [DB, 162, "box", "#c573a4"],
  ["jatim_kab", 58, "box", "#d67edb"],
];
function LayerRow({ i }: { i: number }) {
  const [name, w, kind, color] = LAYERS[i];
  return (
    <div className="flex h-4 items-center">
      <svg width="23" height="16" viewBox="0 0 23 16" className="shrink-0" shapeRendering="crispEdges">
        <path d={`M10.500 0V${i === 11 ? 8 : 16}M11 8.500H20`} stroke="#999" strokeDasharray="1 1" fill="none" />
      </svg>
      <Check />
      <svg width="16" height="16" viewBox="0 0 16 16" className="ml-[6px] mr-[4px] shrink-0">
        {kind === "dot" && <circle cx="8" cy="7.500" r="3" fill={color} stroke="#55483e" />}
        {kind === "line" && <path d="M0 8H16" stroke={color} shapeRendering="crispEdges" />}
        {kind === "box" && <rect x=".5" y="0" width="15" height="15.500" fill={color} stroke="#444" strokeOpacity=".75" />}
      </svg>
      <div className={`flex h-4 w-[167px] items-center overflow-hidden pl-[2px] pt-px text-[11.5px] font-bold ${i === 0 ? "border border-dotted border-black pl-px pt-0 underline" : ""}`}>
        <Fit w={w}>{name}</Fit>
      </div>
    </div>
  );
}
const Spin = () => (
  <div className="flex h-full w-[15px] shrink-0 flex-col border-l border-[#aaa] bg-[#f5f5f5]">
    <div className="flex flex-1 items-center justify-center border-b border-[#aaa]"><Tri dir="up" s={8} /></div>
    <div className="flex flex-1 items-center justify-center"><Tri s={8} /></div>
  </div>
);

const MENUS: [string, string][] = [
  ["Project", "w-[49px]"], ["Edit", "w-[33px]"], ["View", "w-[37px]"], ["Layer", "w-[42px]"], ["Settings", "w-[54px]"], ["Plugins", "w-[49px]"],
  ["Vector", "w-[44px]"], ["Raster", "w-[47px]"], ["Database", "w-[61px]"], ["Web", "w-[37px]"], ["Processing", "w-[66px]"], ["Help", "w-[30px]"],
];
const MENU_TEXT = [35, 19, 22, 27, 40, 34, 30, 33, 47, 23, 52, 22];
const LEFT: [string, boolean][] = [
  ["vec", false], ["raster", false], ["feather", false], ["pg", true], ["wms", true], ["wcs", false], ["wfs", true], ["comma", false], ["virt", false], ["newvec", true],
];

export default function App() {
  return (
    <div className="flex h-[600px] w-[1024px] flex-col overflow-hidden bg-[#efefef] font-['DejaVu_Sans_Condensed','DejaVu_Sans',sans-serif] text-[11px] leading-[14px] text-black [font-stretch:condensed]">
      {/* title bar */}
      <div className="flex h-[22px] shrink-0 items-start border-b border-[#35506b] bg-[linear-gradient(90deg,#d9e8f5_0,#c4dcf2_14%,#a3cbef_17%,#93b8df_20%,#a0c8ee_23%,#86a8d0_26%,#8cb0d8_28%,#a5d2fa_30%,#7fa5cf_33.500%,#a5d2fa_36%,#b1dafc_45%,#a6d5fa_65%,#b6dcfa_78%,#a7d2f7_100%)]">
        <svg width="15" height="19" viewBox="0 0 15 19" className="ml-px mt-px">
          <path d="M2 8C4 2 10 1 13 4C15 10 11 15 4 17C0 15 0 12 2 8Z" fill="#c9d94f" stroke="#9eb63d" />
          <path d="M4 10C5 5 8 4 10 5C12 8 9 12 5 13Z" fill="#e8f2cb" />
          <path d="M3 15L11 3L14 2L13 6L6 14Z" fill="#28744a" />
        </svg>
        <div className="ml-[5px] mt-[4px] text-[12px]"><Fit w={146}>QGIS 2.18.4 - PETA JEMBER</Fit></div>
        <div className="ml-auto mr-[3px] flex h-[18px] w-[103px] overflow-hidden rounded-b-[4px] border border-t-0 border-[#415469]">
          <div className="flex w-[28px] items-center justify-center border-r border-[#50657b] bg-[linear-gradient(#d5e2ee_0_45%,#91a9c2_50%,#b9cce0)]">
            <div className="mt-[3px] h-[5px] w-3 rounded-[1px] border border-[#4e5966] bg-white" />
          </div>
          <div className="flex w-[27px] items-center justify-center border-r border-[#50657b] bg-[linear-gradient(#d5e2ee_0_45%,#91a9c2_50%,#b9cce0)]">
            <svg width="13" height="13" viewBox="0 0 13 13" fill="#fff" stroke="#4e5966"><path d="M4 1H12V9H4Z" /><path d="M1 4H9V12H1Z" /><path d="M4 7H6V9H4Z" /></svg>
          </div>
          <div className="flex flex-1 items-center justify-center bg-[linear-gradient(#e09a87_0_45%,#b93622_50%,#d56545)]">
            <svg width="13" height="11" viewBox="0 0 13 11"><path d="M2.500 1.500L10.500 9.500M10.500 1.500L2.500 9.500" stroke="#5d3734" strokeWidth="4.600" /><path d="M2.500 1.500L10.500 9.500M10.500 1.500L2.500 9.500" stroke="#fff" strokeWidth="2.900" /></svg>
          </div>
        </div>
      </div>
      {/* menu bar */}
      <div className="flex h-[23px] shrink-0 items-center border-b border-[#b8b8b8] pl-[9px] pt-[2px]">
        {MENUS.map(([m, cell], i) => (
          <div key={m} className={`flex shrink-0 ${cell}`}>
            <Fit w={MENU_TEXT[i]}>{m}</Fit>
          </div>
        ))}
      </div>
      {/* toolbars */}
      <div className="flex h-[39px] shrink-0 items-center border-b border-[#b8b8b8] border-t border-t-[#fafafa]">
        <div className="w-[11px] shrink-0 pl-[5px]"><Dots id="h1" className="h-[30px] w-[5px]" /></div>
        <Tools names="new open save saveas print composer" />
        <div className="w-[14px] shrink-0 pl-2"><Dots id="h2" className="h-[30px] w-[5px]" /></div>
        <Tools names="touch pan pansel zin zout z11 zfull zsel zlayer zlast znext bookn book refresh" />
        <div className="w-[14px] shrink-0 pl-2"><Dots id="h3" className="h-[30px] w-[5px]" /></div>
        <Tools names="identify action" />
        <Drop c="#999" />
        <Tools names="select" />
        <Drop />
        <Tools names="expr" />
        <Drop />
        <Tools names="desel" />
        <div className="w-[30px] shrink-0 pb-1 text-center text-[15px] font-bold">»</div>
        <div className="w-[7px] shrink-0"><Dots id="h4" className="h-[30px] w-[5px]" /></div>
        <Tools names="help" />
      </div>
      <div className="flex h-[40px] shrink-0 items-center border-b-2 border-[#bcbcbc] border-t border-t-[#fafafa]">
        <div className="w-[11px] shrink-0 pl-[5px]"><Dots id="h5" className="h-[30px] w-[5px]" /></div>
        <Tools names="pencils pencil savedim blob curve" />
        <Drop c="#999" />
        <Tools names="blobmove node trash cut copy paste" />
        <div className="w-[13px] shrink-0 pl-2"><Dots id="h6" className="h-[30px] w-[5px]" /></div>
        <Tools names="abc pie pin pindim tageye tagmove tagrot tagedit" />
        <div className="w-[15px] shrink-0 pl-[9px]"><Dots id="h7" className="h-[30px] w-[5px]" /></div>
        <Tools names="csw" />
        <div className="w-[14px] shrink-0 pl-2"><Dots id="h8" className="h-[30px] w-[5px]" /></div>
        <Tools names="python" />
      </div>
      {/* body */}
      <div className="flex h-[446px] shrink-0">
        <div className="w-[52px] shrink-0 border-r border-[#b8b8b8] pt-[5px]">
          <Dots id="v1" className="ml-[5px] block h-[5px] w-[41px]" />
          <div className="-mt-px">
            {LEFT.map(([n, d]) => (
              <div key={n} className="flex h-[34px] items-center pl-2">
                <Icon n={n} />
                {d && <div className="ml-[5px]"><Tri s={10} /></div>}
              </div>
            ))}
          </div>
          <Dots id="v2" className="ml-[5px] mt-[10px] block h-[5px] w-[41px]" />
        </div>
        <div className="flex w-[234px] shrink-0 flex-col pl-px">
          <PanelTitle title="Browser Panel" w={60} id="p1" />
          <div className="flex h-[34px] items-center pl-px pt-px">
            {["addlay", "refresh", "funnel", "up", "info"].map((n) => <SmallTool key={n} n={n} />)}
          </div>
          <div className="flex h-[94px] shrink-0 flex-col border border-[#aaa] bg-white">
            <div className="flex h-[75px]">
              <div className="h-[75px] flex-1 overflow-hidden pt-[2px]">
                <TreeRow label="Project home" w={64} />
                <TreeRow label="Home" w={28} />
                <TreeRow label="Favourites" w={51} leaf />
                <TreeRow label="C:/" w={16} />
                <TreeRow label="D:/" w={16} />
              </div>
              <div className="mr-px mt-px flex h-[74px] w-4 shrink-0 flex-col">
                <ScrollBtn dir="up" />
                <div className="h-[26px] border border-[#929292] bg-[#f2f2f2]" />
                <ScrollBtn dir="up" />
                <ScrollBtn dir="down" />
              </div>
            </div>
            <div className="flex h-[16px] pr-[18px]">
              <ScrollBtn dir="left" className="h-4 w-[16px]" />
              <div className="flex h-4 w-[129px] items-center justify-center rounded-[2px] border border-[#929292] bg-[#f2f2f2]">
                <svg width="19" height="11" shapeRendering="crispEdges">
                  {[0, 4, 8].map((y) => <path key={y} d={`M0 ${y + 0.5}H19`} stroke="#aaa" strokeDasharray="2 2" />)}
                </svg>
              </div>
              <div className="flex-1 bg-[#ededed]" />
              <ScrollBtn dir="left" />
              <ScrollBtn dir="right" />
            </div>
          </div>
          <div className="flex h-[7px] items-center justify-center"><Dots id="s1" className="h-[3px] w-[73px]" /></div>
          <PanelTitle title="Layers Panel" w={54} id="p2" />
          <div className="flex h-[34px] items-center pl-px pt-px">
            {["brush", "group", "eye", "funnel", "epsf"].map((n) => <SmallTool key={n} n={n} />)}
            <div className="-ml-px mr-px flex w-[12px] justify-center"><Tri c="#999" /></div>
            {["down", "up", "remove"].map((n) => <SmallTool key={n} n={n} />)}
          </div>
          <div className="h-[245px] shrink-0 rounded-[2px] border-2 border-[#4e9ff1] bg-white">
            <div className="-ml-px">{LAYERS.map((_, i) => <LayerRow key={i} i={i} />)}</div>
          </div>
        </div>
        <div className="flex w-[6px] shrink-0 items-center justify-center"><Dots id="s2" className="h-[140px] w-[3px]" /></div>
        <div className="h-full flex-1 rounded-[3px] border border-[#a9a9a9] bg-white pl-[187px] pt-[100px]">
          <MapDrawing />
        </div>
      </div>
      {/* status bar */}
      <div className="flex h-[28px] shrink-0 items-center pt-[3px]">
        <div className="ml-[176px] w-[57px] pt-px"><Fit w={53}>Coordinate</Fit></div>
        <div className="flex h-[20px] w-[110px] shrink-0 items-center justify-center rounded-[2px] border border-[#aaa] bg-white pt-px"><Fit w={76}>112.744,-8.742</Fit></div>
        <div className="flex w-[34px] shrink-0 pl-[5px]"><Icon n="mouse" s={16} /></div>
        <div className="w-[29px] shrink-0 pt-px"><Fit w={25}>Scale</Fit></div>
        <div className="flex h-[20px] w-[89px] shrink-0 items-center rounded-[2px] border border-[#aaa] bg-white pl-1">
          <Fit w={59} className="pt-px">1:1,008,000</Fit>
          <div className="ml-auto flex h-full w-[16px] items-center justify-center border-l border-[#aaa] bg-[#f3f3f3]"><Tri s={8} /></div>
        </div>
        <div className="flex w-[34px] shrink-0 pl-[5px]"><Icon n="lock" s={16} /></div>
        <div className="w-[48px] shrink-0"><Fit w={44}>Magnifier</Fit></div>
        <div className="flex h-[21px] w-[77px] shrink-0 items-center justify-between rounded-[2px] border border-[#aaa] bg-white pl-1"><Fit w={29} className="pt-px">100%</Fit><Spin /></div>
        <div className="w-[59px] shrink-0 pl-2 pt-px"><Fit w={42}>Rotation</Fit></div>
        <div className="flex h-[21px] w-[77px] shrink-0 items-center justify-between rounded-[2px] border border-[#aaa] bg-white pl-1"><Fit w={16} className="pt-px">0.0</Fit><Spin /></div>
        <div className="ml-[6px] w-[17px] shrink-0"><Check /></div>
        <div className="w-[54px] shrink-0"><Fit w={35}>Render</Fit></div>
        <div className="w-[19px] shrink-0"><Icon n="crs" s={16} /></div>
        <div className="w-[107px] shrink-0 pt-px"><Fit w={84}>EPSG:4238 (OTF)</Fit></div>
        <Icon n="msg" s={16} />
      </div>
      <div className="h-[2px] shrink-0 border-t border-[#34475e] bg-[linear-gradient(90deg,#b9cfe7_0_60px,#26323f_60px_97px,#c3d8ee_97px_152px,#26323f_152px_193px,#c3d8ee_193px_198px,#26323f_198px_239px,#c3d8ee_239px_244px,#26323f_244px_285px,#c3d8ee_285px_290px,#26323f_290px_331px,#c3d8ee_331px)]" />
    </div>
  );
}
